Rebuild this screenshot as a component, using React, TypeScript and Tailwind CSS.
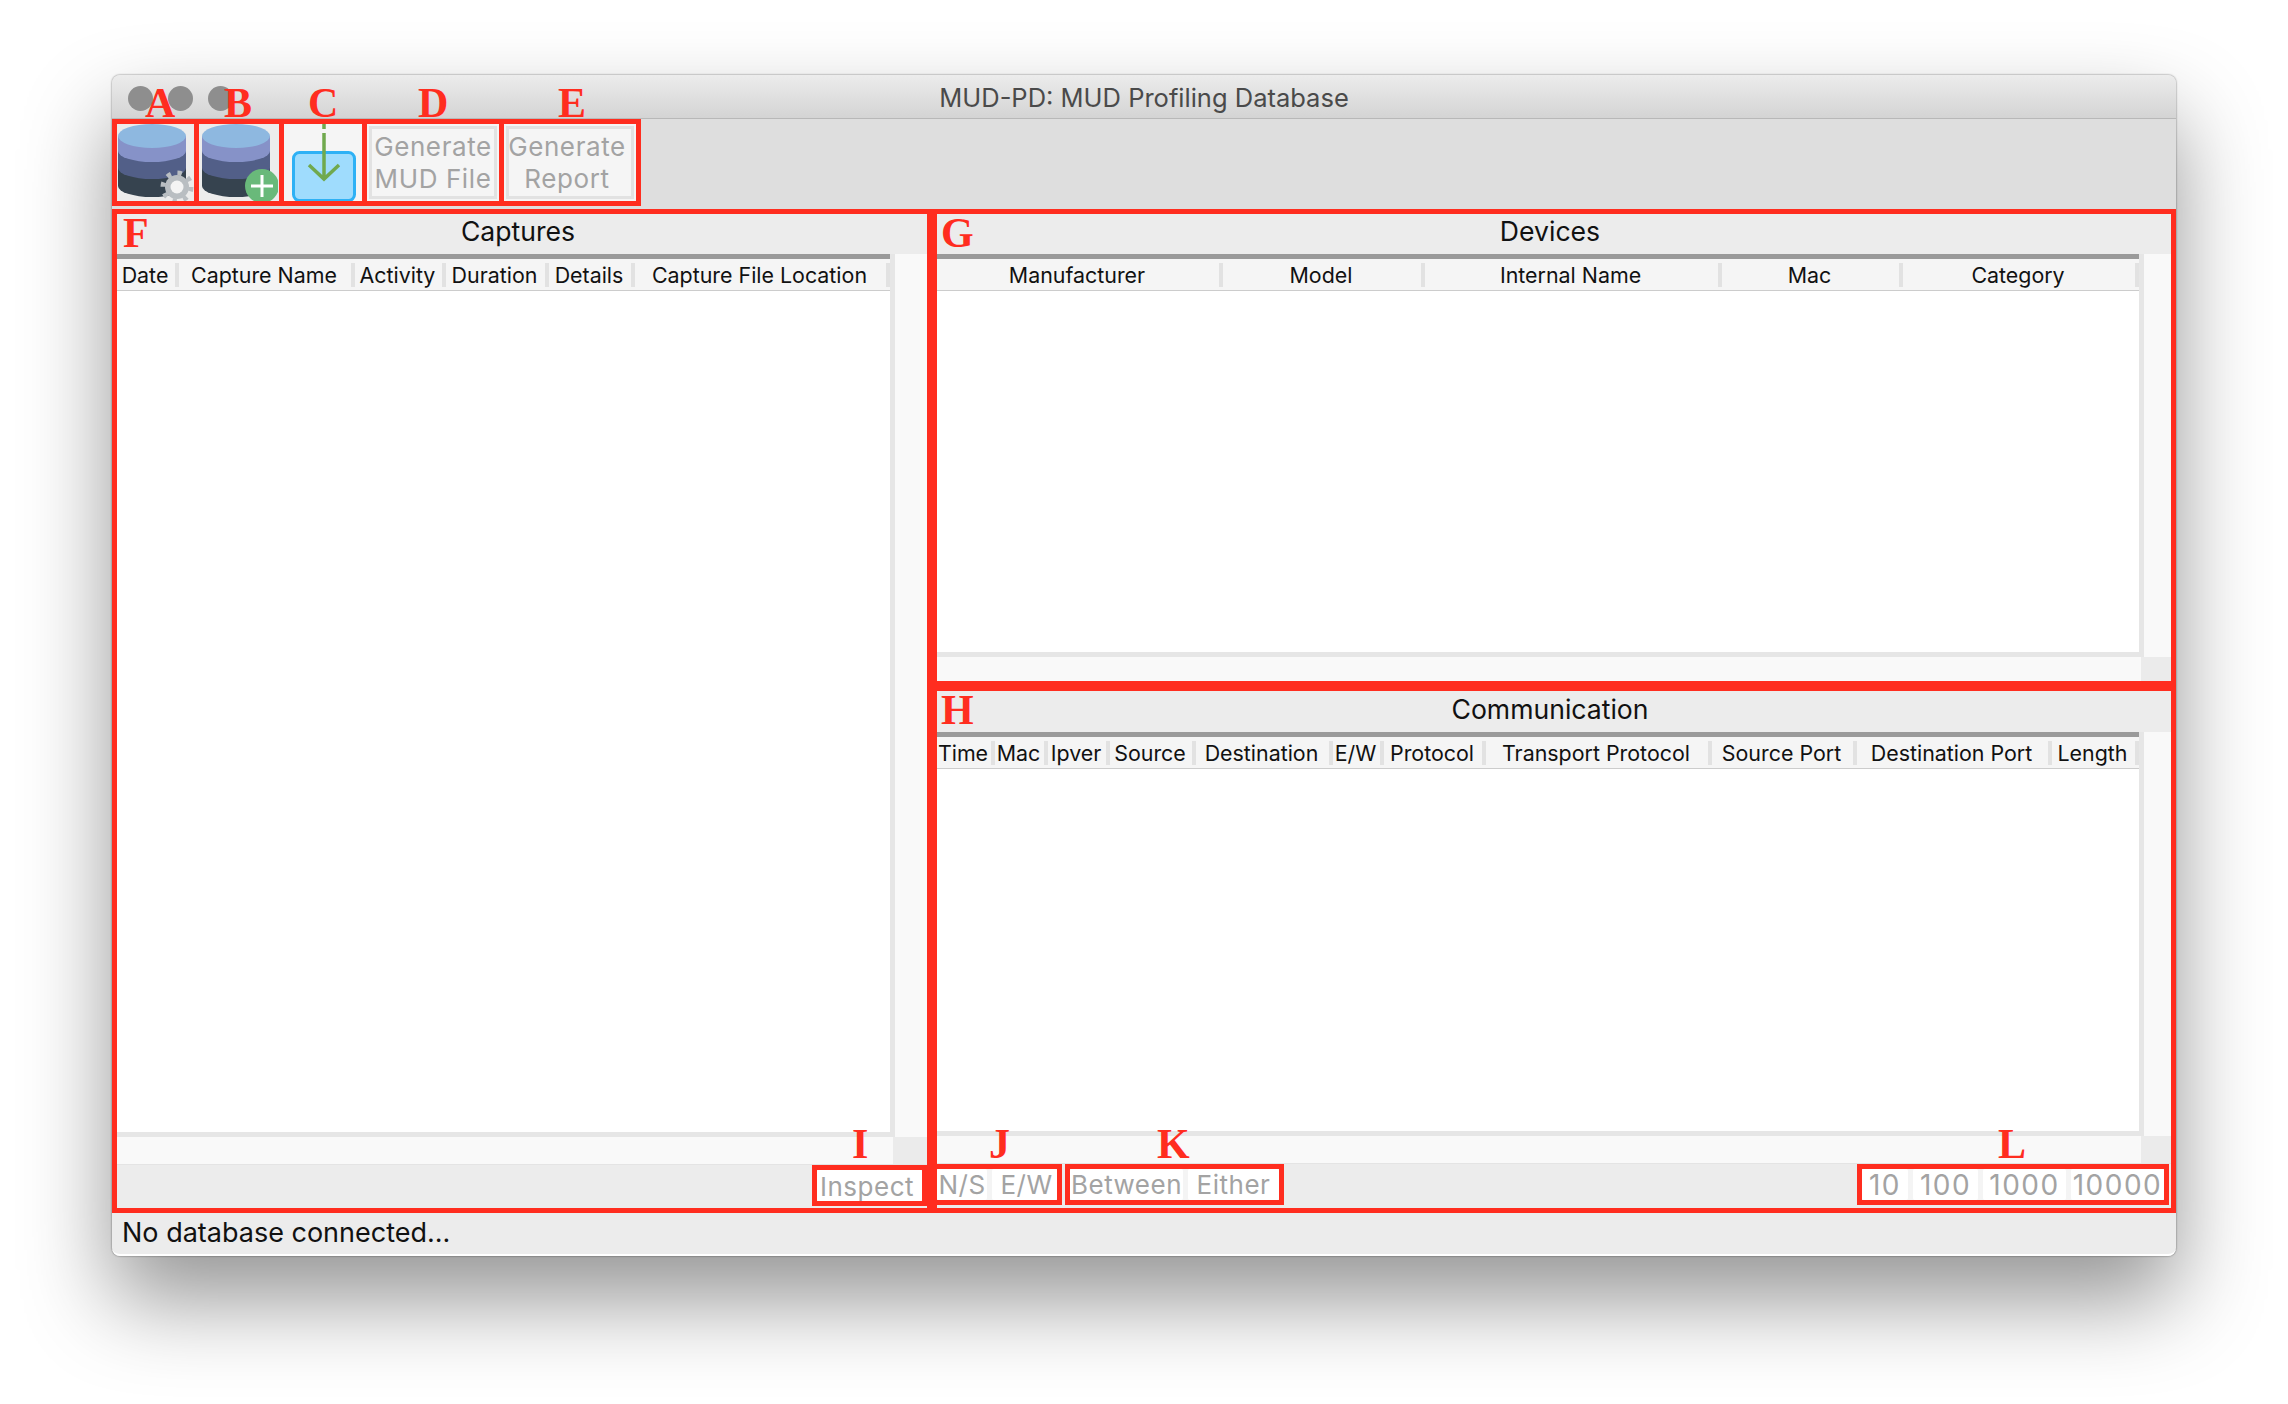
type Col = { label: string; width: string };

const captureCols: Col[] = [
  { label: "Date", width: "w-[62px]" },
  { label: "Capture Name", width: "w-[176px]" },
  { label: "Activity", width: "w-[91px]" },
  { label: "Duration", width: "w-[103px]" },
  { label: "Details", width: "w-[86px]" },
  { label: "Capture File Location", width: "flex-1" },
];

const deviceCols: Col[] = [
  { label: "Manufacturer", width: "w-[286px]" },
  { label: "Model", width: "w-[202px]" },
  { label: "Internal Name", width: "w-[297px]" },
  { label: "Mac", width: "w-[181px]" },
  { label: "Category", width: "flex-1" },
];

const commCols: Col[] = [
  { label: "Time", width: "w-[58px]" },
  { label: "Mac", width: "w-[53px]" },
  { label: "Ipver", width: "w-[62px]" },
  { label: "Source", width: "w-[86px]" },
  { label: "Destination", width: "w-[137px]" },
  { label: "E/W", width: "w-[51px]" },
  { label: "Protocol", width: "w-[102px]" },
  { label: "Transport Protocol", width: "w-[226px]" },
  { label: "Source Port", width: "w-[145px]" },
  { label: "Destination Port", width: "w-[195px]" },
  { label: "Length", width: "flex-1" },
];

const letters = [
  { text: "A", pos: "left-[33px] top-[4px]" },
  { text: "B", pos: "left-[112px] top-[4px]" },
  { text: "C", pos: "left-[196px] top-[4px]" },
  { text: "D", pos: "left-[306px] top-[4px]" },
  { text: "E", pos: "left-[446px] top-[4px]" },
  { text: "F", pos: "left-[11px] top-[134px]" },
  { text: "G", pos: "left-[829px] top-[134px]" },
  { text: "H", pos: "left-[829px] top-[611px]" },
  { text: "I", pos: "left-[740px] top-[1045px]" },
  { text: "J", pos: "left-[877px] top-[1045px]" },
  { text: "K", pos: "left-[1045px] top-[1045px]" },
  { text: "L", pos: "left-[1886px] top-[1045px]" },
];

function DbIcon({ badge }: { badge: "gear" | "plus" }) {
  return (
    <svg viewBox="0 0 77 77" className="h-[77px] w-[77px]">
      <path d="M1 12V62A34 11 0 0 0 69 62V12Z" fill="#36434f" />
      <path d="M1 12V44A34 11 0 0 0 69 44V12Z" fill="#525f88" />
      <path d="M1 12V27A34 11 0 0 0 69 27V12Z" fill="#8692c8" />
      <ellipse cx="35" cy="12" rx="34" ry="12" fill="#8eb8e0" />
      {badge === "gear" ? (
        <g>
          <circle cx="60" cy="63" r="12" fill="#b9bec2" />
          <circle cx="60" cy="63" r="14" fill="none" stroke="#b9bec2" strokeWidth="5" strokeDasharray="4.4 6.6" />
          <circle cx="60" cy="63" r="6.5" fill="#f4f4f4" />
        </g>
      ) : (
        <g>
          <circle cx="61" cy="62" r="17" fill="#69b97a" />
          <path d="M61 51V73M50 62H72" stroke="#fff" strokeWidth="3" />
        </g>
      )}
    </svg>
  );
}

function ImportIcon() {
  return (
    <svg viewBox="0 0 73 77" className="h-[77px] w-[73px]">
      <rect x="6.5" y="28.5" width="61" height="48" rx="6" fill="#9fdcfd" stroke="#2eb1f5" strokeWidth="3" />
      <path d="M37 0V5M37 9V55M22 41L37 55L52 41" fill="none" stroke="#70a94e" strokeWidth="3.5" />
    </svg>
  );
}

function GenerateButton({ lines, inset }: { lines: string[]; inset: string }) {
  return (
    <div className="-ml-[5px] flex h-[87px] w-[142px] items-center justify-center border-[5px] border-[#ff2d1f] bg-[#f5f5f5] p-[2px]">
      <div className={`flex h-full w-full flex-col items-center justify-center border-[3px] border-[#e2e2e2] text-[26px] leading-[32px] tracking-[0.6px] text-[#a3a3a3] ${inset}`}>
        {lines.map((line) => (
          <span key={line}>{line}</span>
        ))}
      </div>
    </div>
  );
}

function Table({
  cols,
  scrollClass,
  cornerClass,
  sideClass,
}: {
  cols: Col[];
  scrollClass: string;
  cornerClass: string;
  sideClass: string;
}) {
  return (
    <div className="flex min-h-0 flex-1 flex-col">
      <div className="flex min-h-0 flex-1">
        <div className="flex flex-1 flex-col border-r-[5px] border-b-[5px] border-[#e6e6e6] bg-white">
          <div className="flex h-[37px] shrink-0 items-center border-t-[5px] border-b border-t-[#9a9a9a] border-b-[#cccccc] bg-[#f5f5f5]">
            {cols.map((col) => (
              <div
                key={col.label}
                className={`${col.width} flex h-[24px] items-center justify-center whitespace-nowrap border-r-[4px] border-[#e2e2e2] pt-[2px] pr-[2px] text-[21.4px] text-[#111]`}
              >
                {col.label}
              </div>
            ))}
          </div>
        </div>
        <div className={`bg-[#f9f9f9] ${sideClass}`} />
      </div>
      <div className={`flex shrink-0 ${scrollClass}`}>
        <div className="flex-1 bg-[#f9f9f9]" />
        <div className={`bg-[#ebebeb] ${cornerClass}`} />
      </div>
    </div>
  );
}

function PanelTitle({ text, height }: { text: string; height: string }) {
  return (
    <div className={`flex shrink-0 items-center justify-center pr-2 pb-[4px] text-[26.6px] text-[#111] ${height}`}>
      {text}
    </div>
  );
}

function BarGroup({
  items,
  className,
  textClass,
}: {
  items: { label: string; width: string }[];
  className: string;
  textClass: string;
}) {
  return (
    <div className={`flex h-[41px] gap-[5px] border-[5px] border-[#ff2d1f] bg-[#f4f4f4] ${className}`}>
      {items.map((item) => (
        <div
          key={item.label}
          className={`${item.width} flex items-center justify-center rounded-[2px] bg-white text-[#a3a3a3] ${textClass}`}
        >
          {item.label}
        </div>
      ))}
    </div>
  );
}

export default function App() {
  return (
    <div className="min-h-[1404px] bg-white pt-[75px] pl-[112px] font-['Inter','Liberation_Sans',sans-serif]">
      <div className="relative flex h-[1181px] w-[2064px] flex-col overflow-visible rounded-[8px] bg-[#ececec] shadow-[0_44px_88px_rgba(0,0,0,0.42),0_0_2px_rgba(0,0,0,0.6)]">
        {/* title bar */}
        <div className="grid h-[44px] shrink-0 grid-cols-[1fr_auto_1fr] items-center rounded-t-[8px] border-b border-[#b8b8b8] bg-gradient-to-b from-[#ececec] to-[#d4d4d4] pt-[3px]">
          <div className="flex gap-[15px] pl-[16px]">
            <span className="h-[25px] w-[25px] rounded-full bg-[#8e8e8e]" />
            <span className="h-[25px] w-[25px] rounded-full bg-[#8e8e8e]" />
            <span className="h-[25px] w-[25px] rounded-full bg-[#8e8e8e]" />
          </div>
          <div className="text-[25.5px] text-[#4a4a4a]">MUD-PD: MUD Profiling Database</div>
          <div />
        </div>

        {/* toolbar */}
        <div className="flex h-[90px] shrink-0 items-start bg-[#dedede]">
          <div className="flex h-[87px] w-[87px] items-center justify-center border-[5px] border-[#ff2d1f] bg-[#ececec]">
            <DbIcon badge="gear" />
          </div>
          <div className="-ml-[5px] flex h-[87px] w-[90px] items-center justify-center border-[5px] border-[#ff2d1f] bg-[#ececec]">
            <DbIcon badge="plus" />
          </div>
          <div className="-ml-[5px] flex h-[87px] w-[88px] items-center justify-center border-[5px] border-[#ff2d1f] bg-[#f5f5f5]">
            <ImportIcon />
          </div>
          <GenerateButton lines={["Generate", "MUD File"]} inset="pr-0" />
          <GenerateButton lines={["Generate", "Report"]} inset="pr-[6px]" />
        </div>

        {/* panels */}
        <div className="flex h-[1004px] shrink-0">
          <div className="flex w-[820px] shrink-0 flex-col border-[5px] border-[#ff2d1f]">
            <PanelTitle text="Captures" height="h-[40px]" />
            <Table cols={captureCols} scrollClass="h-[27px]" cornerClass="w-[34px]" sideClass="w-[32px]" />
            <div className="flex h-[44px] shrink-0 items-start justify-end border-t border-[#e4e4e4]">
              <BarGroup
                className="w-[115px]"
                textClass="pt-[2px] pr-[5px] text-[26px] tracking-[0.5px]"
                items={[{ label: "Inspect", width: "flex-1" }]}
              />
            </div>
          </div>

          <div className="flex flex-1 flex-col">
            <div className="flex h-[477px] shrink-0 flex-col border-[5px] border-[#ff2d1f]">
              <PanelTitle text="Devices" height="h-[40px]" />
              <Table cols={deviceCols} scrollClass="h-[24px]" cornerClass="w-[30px]" sideClass="w-[27px]" />
            </div>
            <div className="flex flex-1 flex-col border-[5px] border-[#ff2d1f]">
              <PanelTitle text="Communication" height="h-[41px]" />
              <Table cols={commCols} scrollClass="h-[27px]" cornerClass="w-[30px]" sideClass="w-[27px]" />
              <div className="flex h-[45px] shrink-0 items-start gap-[3px] border-t border-[#e4e4e4]">
                <BarGroup
                  className="w-[125px] border-l-0"
                  textClass="text-[26px] tracking-[0.5px]"
                  items={[
                    { label: "N/S", width: "w-[50px]" },
                    { label: "E/W", width: "w-[65px] pl-[4px]" },
                  ]}
                />
                <BarGroup
                  className="w-[219px]"
                  textClass="text-[26px] tracking-[0.5px]"
                  items={[
                    { label: "Between", width: "w-[113px]" },
                    { label: "Either", width: "w-[91px]" },
                  ]}
                />
                <div className="flex-1" />
                <BarGroup
                  className="mr-[2px] w-[312px]"
                  textClass="text-[28px] tracking-[1.5px]"
                  items={[
                    { label: "10", width: "w-[46px]" },
                    { label: "100", width: "w-[65px]" },
                    { label: "1000", width: "w-[83px]" },
                    { label: "10000", width: "w-[93px]" },
                  ]}
                />
              </div>
            </div>
          </div>
        </div>

        {/* status bar */}
        <div className="flex h-[43px] shrink-0 items-center rounded-b-[8px] border-b-2 border-white pl-[10px] text-[27px] text-[#111]">
          No database connected...
        </div>

        {/* red callout letters */}
        {letters.map((l) => (
          <span
            key={l.text}
            className={`absolute ${l.pos} font-['Liberation_Serif',serif] text-[42px] leading-[48px] font-bold text-[#ff2d1f]`}
          >
            {l.text}
          </span>
        ))}
      </div>
    </div>
  );
}
